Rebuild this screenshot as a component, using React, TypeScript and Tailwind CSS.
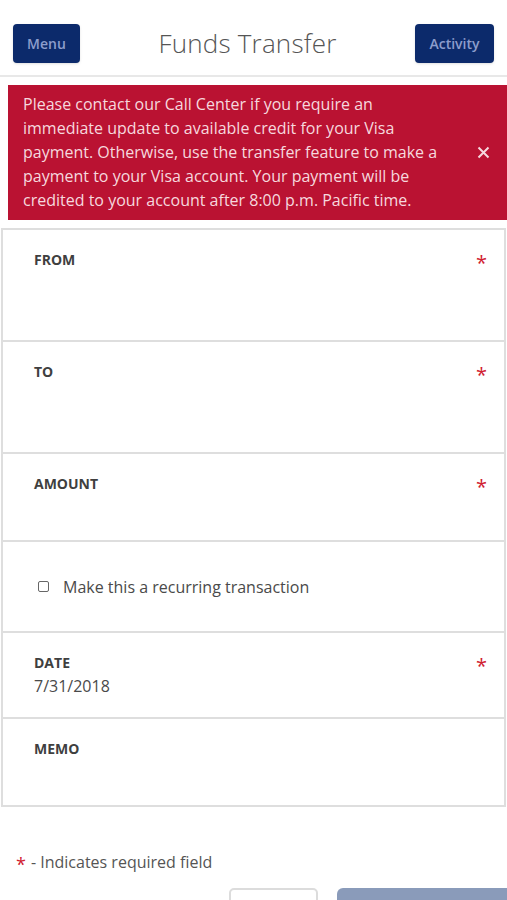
import { useState } from 'react';

type Field = {
  label: string;
  required?: boolean;
  value?: string;
  height: string;
};

const fields: Field[] = [
  { label: 'From', required: true, height: 'h-[114px]' },
  { label: 'To', required: true, height: 'h-[114px]' },
  { label: 'Amount', required: true, height: 'h-[90px]' },
];

const FieldBox = ({ field }: { field: Field }) => (
  <div
    className={`relative border-2 border-[#dedede] -mt-[2px] bg-white px-[31px] pt-[20px] ${field.height}`}
  >
    <div className="flex items-start justify-between">
      <span className="text-[14px] font-bold uppercase text-[#3f3f3f] leading-[20px]">
        {field.label}
      </span>
      {field.required && (
        <span className="text-[20px] leading-[18px] text-[#d0202f] pt-[4px] -mr-[14px]">*</span>
      )}
    </div>
    {field.value && (
      <div className="text-[16px] text-[#4a4a4a] leading-[22px]">{field.value}</div>
    )}
  </div>
);

export default function App() {
  const [showBanner, setShowBanner] = useState(true);
  const [recurring, setRecurring] = useState(false);

  return (
    <div className="w-[507px] min-h-[900px] bg-white overflow-hidden font-['Open_Sans',sans-serif]">
      {/* Header */}
      <div className="relative flex items-center justify-between px-[13px] pt-[24px] pb-[12px] border-b-2 border-[#e8e8e8]">
        <button
          type="button"
          className="h-[39px] w-[67px] rounded-[4px] bg-[#0c2a6b] text-[14px] font-semibold text-[#8c9dcc] shadow-sm"
        >
          Menu
        </button>
        <h1 className="text-[26px] font-light text-[#555] tracking-[0.2px]">Funds Transfer</h1>
        <button
          type="button"
          className="h-[39px] w-[79px] rounded-[4px] bg-[#0c2a6b] text-[14px] font-semibold text-[#8c9dcc] shadow-sm"
        >
          Activity
        </button>
      </div>

      {/* Alert banner */}
      {showBanner && (
        <div className="ml-[8px] mt-[8px] flex items-center bg-[#ba1232] pl-[15px] pr-[16px] pt-[7px] pb-[8px]">
          <p className="w-[432px] text-[16px] leading-[24px] text-[#f6d8de]">
            Please contact our Call Center if you require an immediate update to available credit for
            your Visa payment. Otherwise, use the transfer feature to make a payment to your Visa
            account. Your payment will be credited to your account after 8:00 p.m. Pacific time.
          </p>
          <button
            type="button"
            aria-label="Dismiss"
            onClick={() => setShowBanner(false)}
            className="ml-auto mr-[1px] text-[#f6d8de]"
          >
            <svg width="13" height="13" viewBox="0 0 13 13" stroke="currentColor" strokeWidth="2">
              <path d="M1.5 1.5 L11.5 11.5 M11.5 1.5 L1.5 11.5" />
            </svg>
          </button>
        </div>
      )}

      {/* Form */}
      <div className="mt-[10px] mx-[1px]">
        {fields.map((f) => (
          <FieldBox key={f.label} field={f} />
        ))}

        <div className="-mt-[2px] h-[93px] border-2 border-[#dedede] flex items-center pl-[35px]">
          <label className="flex items-center gap-[14px] text-[16px] text-[#4a4a4a] cursor-pointer">
            <span
              onClick={() => setRecurring(!recurring)}
              className={`h-[11px] w-[11px] rounded-[2px] border border-[#666] ${recurring ? 'bg-[#0c2a6b]' : 'bg-white'}`}
            />
            Make this a recurring transaction
          </label>
        </div>

        <FieldBox field={{ label: 'Date', required: true, value: '7/31/2018', height: 'h-[88px]' }} />
        <FieldBox field={{ label: 'Memo', height: 'h-[90px]' }} />
      </div>

      {/* Footer */}
      <div className="mt-[43px] pl-[16px] text-[16px] text-[#555] flex items-center">
        <span className="text-[#d0202f] text-[18px] mr-[5px] leading-none pt-[4px]">*</span>
        <span>- Indicates required field</span>
      </div>
      <div className="mt-[14px] flex justify-end gap-[19px]">
        <button
          type="button"
          className="h-[40px] w-[89px] rounded-[5px] border-2 border-[#dcdcdc] bg-white"
        />
        <button type="button" className="h-[40px] w-[170px] rounded-l-[6px] bg-[#8a9bba]" />
      </div>
    </div>
  );
}
